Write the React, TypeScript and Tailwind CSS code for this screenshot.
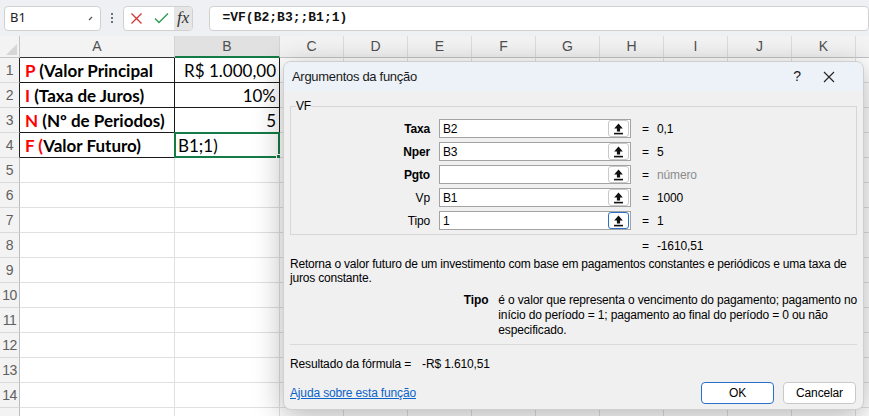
import React from 'react';

const cols = [
  { id: 'A', w: 'w-[155px]' },
  { id: 'B', w: 'w-[105px]' },
  { id: 'C', w: 'w-[64px]' },
  { id: 'D', w: 'w-[64px]' },
  { id: 'E', w: 'w-[64px]' },
  { id: 'F', w: 'w-[64px]' },
  { id: 'G', w: 'w-[64px]' },
  { id: 'H', w: 'w-[64px]' },
  { id: 'I', w: 'w-[64px]' },
  { id: 'J', w: 'w-[64px]' },
  { id: 'K', w: 'w-[64px]' },
  { id: 'L', w: 'w-[64px]' },
];

const Red = ({ children }: { children: React.ReactNode }) => (
  <span className="text-[#ff0000]">{children}</span>
);

const tableA: React.ReactNode[] = [
  <>
    <Red>P</Red> (Valor Principal
  </>,
  <>
    <Red>I</Red> (Taxa de Juros)
  </>,
  <>
    <Red>N</Red> (Nº de Periodos)
  </>,
  <>
    <Red>F (</Red>Valor Futuro)
  </>,
];

const tableB = ['R$ 1.000,00', '10%', '5'];

function RefButton({ focused }: { focused?: boolean }) {
  return (
    <div
      className={
        'absolute right-[1px] top-[0px] w-[21px] h-[17px] rounded-[3px] bg-white flex items-center justify-center border ' +
        (focused ? 'border-[#2a6fc9]' : 'border-[#c9c9c9]')
      }
    >
      <svg width="11" height="12" viewBox="0 0 11 12">
        <path d="M5.5 0.6 L1.2 5.4 H3.9 V8.6 H7.1 V5.4 H9.8 Z" fill="#111" />
        <rect x="1" y="9.8" width="9" height="1.6" fill="#111" />
      </svg>
    </div>
  );
}

const args = [
  { label: 'Taxa', bold: true, value: 'B2', result: '0,1' },
  { label: 'Nper', bold: true, value: 'B3', result: '5' },
  { label: 'Pgto', bold: true, value: '', result: 'número', muted: true },
  { label: 'Vp', bold: false, value: 'B1', result: '1000' },
  { label: 'Tipo', bold: false, value: '1', result: '1', focused: true },
];

function Toolbar() {
  return (
    <div className="h-[36px] bg-[#eef0f3] flex items-center pl-[4px]">
      <div className="w-[100px] h-[25px] bg-white border border-[#d1d1d1] rounded-[4px] flex items-center justify-between pl-[5px] pr-[6px] text-[13px] text-[#222]">
        <span>B1</span>
        <svg width="6" height="6" viewBox="0 0 6 6" className="mt-[2px]">
          <path d="M1 4 L4 1" stroke="#555" strokeWidth="1.2" />
        </svg>
      </div>
      <div className="w-[22px] flex flex-col items-center gap-[2px]">
        <span className="w-[2px] h-[2px] rounded-full bg-[#444]" />
        <span className="w-[2px] h-[2px] rounded-full bg-[#444]" />
        <span className="w-[2px] h-[2px] rounded-full bg-[#444]" />
      </div>
      <div className="w-[73px] h-[25px] bg-white border border-[#d1d1d1] rounded-[4px] flex items-center overflow-hidden">
        <div className="w-[26px] flex justify-center">
          <svg width="13" height="13" viewBox="0 0 13 13">
            <path d="M1.5 1.5 L11.5 11.5 M11.5 1.5 L1.5 11.5" stroke="#d13438" strokeWidth="1.3" />
          </svg>
        </div>
        <div className="w-[24px] flex justify-center">
          <svg width="15" height="12" viewBox="0 0 15 12">
            <path d="M1 6.5 L5 10.5 L14 1.5" stroke="#2c9a55" strokeWidth="1.4" fill="none" />
          </svg>
        </div>
        <div className="flex-1 h-full bg-[#e6e6e6] flex items-center justify-center font-['Liberation_Serif'] italic text-[17px] text-[#333]">
          fx
        </div>
      </div>
      <div className="ml-[16px] w-[680px] h-[25px] bg-white border border-[#d1d1d1] rounded-[4px] flex items-center pl-[12px] font-['Liberation_Mono'] font-bold text-[13px] text-[#111]">
        =VF(B2;B3;;B1;1)
      </div>
    </div>
  );
}

function Grid() {
  const rows = Array.from({ length: 15 }, (_, i) => i + 1);
  return (
    <div className="font-['Lato'] text-[17px] text-black">
      <div className="flex h-[22px]">
        <div className="w-[20px] shrink-0 bg-[#f3f3f3] border-r border-b border-[#c4c4c4] relative">
          <div className="absolute right-[2px] bottom-[2px] w-0 h-0 border-l-[11px] border-l-transparent border-b-[11px] border-b-[#d6d6d6]" />
        </div>
        {cols.map((c) => (
          <div
            key={c.id}
            className={
              c.w +
              ' shrink-0 flex items-center justify-center font-["Liberation_Sans"] text-[14px] text-[#505050] border-r ' +
              (c.id === 'B'
                ? 'bg-[#e1e1e1] border-b-2 border-b-[#137b43] border-r-[#d4d4d4]'
                : c.id === 'A'
                ? 'bg-[#f3f3f3] border-b border-b-[#333] border-r-[#d4d4d4]'
                : 'bg-[#f3f3f3] border-b border-b-[#c4c4c4] border-r-[#dcdcdc]')
            }
          >
            {c.id === 'L' ? '' : c.id}
          </div>
        ))}
      </div>
      {rows.map((r) => {
        const inTable = r <= 4;
        return (
          <div key={r} className="flex h-[25px]">
            <div
              className={
                'w-[20px] shrink-0 bg-[#f3f3f3] flex items-center justify-center font-["Liberation_Sans"] text-[14px] tracking-[-0.5px] text-[#606060] border-b border-b-[#dadada] border-r ' +
                (inTable ? 'border-r-[#222]' : 'border-r-[#bdbdbd]')
              }
            >
              {r < 15 ? r : ''}
            </div>
            {cols.map((c) => {
              const tableCell = inTable && (c.id === 'A' || c.id === 'B');
              const active = r === 4 && c.id === 'B';
              return (
                <div
                  key={c.id}
                  className={
                    c.w +
                    ' shrink-0 relative flex items-center pt-[2px] border-r border-b ' +
                    (tableCell ? 'border-[#1a1a1a] ' : 'border-[#e0e0e0] ') +
                    (c.id === 'B' && r <= 3 ? 'justify-end pr-[3px]' : c.id === 'A' ? 'pl-[5px]' : 'pl-[3px]')
                  }
                >
                  {c.id === 'A' && inTable && <span className="font-bold">{tableA[r - 1]}</span>}
                  {c.id === 'B' && r <= 3 && <span>{tableB[r - 1]}</span>}
                  {active && (
                    <>
                      <span>B1;1)</span>
                      <div className="absolute -left-[1px] -top-[1px] -right-[1px] -bottom-[1px] border-2 border-[#137b43]">
                        <div className="absolute -right-[3px] -bottom-[3px] w-[5px] h-[5px] bg-[#137b43] border border-white" />
                      </div>
                    </>
                  )}
                </div>
              );
            })}
          </div>
        );
      })}
    </div>
  );
}

function Dialog() {
  return (
    <div className="absolute left-[283px] top-[61px] w-[581px] h-[349px] rounded-[8px] border border-[#cfcfcf] bg-[#f0f0f0] shadow-[0_6px_30px_rgba(0,0,0,0.3)] overflow-hidden font-['Liberation_Sans'] text-[12px] tracking-[-0.15px] text-black flex flex-col">
      <div className="h-[29px] bg-[#edf2f8] flex items-center pl-[8px] pr-[28px] text-[13px] tracking-[-0.3px] text-[#1a1a1a]">
        <span className="flex-1">Argumentos da função</span>
        <span className="w-[12px] text-center text-[14px] mr-[20px]">?</span>
        <svg width="12" height="12" viewBox="0 0 12 12">
          <path d="M1 1 L11 11 M11 1 L1 11" stroke="#222" strokeWidth="1.1" />
        </svg>
      </div>
      <div className="px-[6px] flex flex-col">
        <fieldset className="mt-[8px] border border-[#d6d6d6] pb-[4px]">
          <legend className="ml-[5px] leading-[14px] text-[12px]">VF</legend>
          <div className="pt-[6px] flex flex-col gap-[4px]">
            {args.map((a) => (
              <div key={a.label} className="flex items-center h-[19px]">
                <span className={'w-[139px] text-right ' + (a.bold ? 'font-bold' : '')}>{a.label}</span>
                <div className="ml-[9px] w-[192px] h-[19px] relative bg-white border border-[#a3a3a3] flex items-center pl-[3px]">
                  {a.value}
                  <RefButton focused={a.focused} />
                </div>
                <span className="ml-[11px] w-[15px]">=</span>
                <span className={a.muted ? 'text-[#8c8c8c]' : ''}>{a.result}</span>
              </div>
            ))}
          </div>
        </fieldset>
        <div className="mt-[4px] h-[14px] leading-[14px] flex pl-[352px]">
          <span className="w-[15px]">=</span>
          <span>-1610,51</span>
        </div>
        <p className="mt-[4px] leading-[14px] whitespace-nowrap tracking-[-0.2px]">
          Retorna o valor futuro de um investimento com base em pagamentos constantes e periódicos e uma taxa de
          <br />
          juros constante.
        </p>
        <div className="mt-[8px] flex leading-[15px]">
          <span className="w-[206px] text-right font-bold">Tipo</span>
          <p className="ml-[10px] whitespace-nowrap">
            é o valor que representa o vencimento do pagamento; pagamento no
            <br />
            início do período = 1; pagamento ao final do período = 0 ou não
            <br />
            especificado.
          </p>
        </div>
        <div className="mt-[6px] border-t border-[#d9d9d9]" />
        <div className="mt-[12px] h-[14px] leading-[14px] flex">
          <span>Resultado da fórmula =</span>
          <span className="ml-[11px]">-R$ 1.610,51</span>
        </div>
        <div className="mt-[11px] h-[22px] flex items-center">
          <span className="flex-1 text-[#0a63c9] underline">Ajuda sobre esta função</span>
          <button className="w-[73px] h-[22px] rounded-[4px] bg-white border border-[#2a6fc9] text-[12px]">OK</button>
          <button className="ml-[9px] mr-[1px] w-[73px] h-[22px] rounded-[4px] bg-white border border-[#c9c9c9] text-[12px]">
            Cancelar
          </button>
        </div>
      </div>
    </div>
  );
}

export default function App() {
  return (
    <div className="w-[869px] h-[416px] relative overflow-hidden bg-white">
      <Toolbar />
      <Grid />
      <Dialog />
    </div>
  );
}
